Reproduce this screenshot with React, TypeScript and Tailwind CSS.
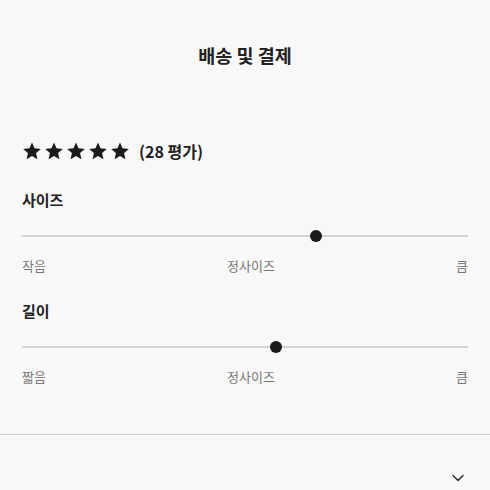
import { ChevronDown } from "lucide-react";

const font = { fontFamily: '"Noto Sans CJK KR", "Noto Sans", sans-serif' };

function Star() {
  return (
    <svg viewBox="0 0 24 24" className="h-[20px] w-[20px] fill-[#1c1c1c]">
      <path d="M12 1.8l3.05 6.95 7.55.7-5.72 5.02 1.7 7.43L12 17.98l-6.58 3.92 1.7-7.43L1.4 9.45l7.55-.7z" />
    </svg>
  );
}

function FitSlider({
  label,
  value,
  low,
}: {
  label: string;
  value: number;
  low: string;
}) {
  return (
    <div className="flex flex-col">
      <div className="text-[15px] font-bold leading-[20px] text-[#222]">{label}</div>
      <div className="relative mt-[25px] h-[2px] w-full bg-[#d2d2d2]">
        <div
          className="absolute top-1/2 h-[12px] w-[12px] -translate-x-1/2 -translate-y-1/2 rounded-full bg-[#1a1a1a]"
          style={{ left: `${value}%` }}
        />
      </div>
      <div className="mt-[20px] flex justify-between text-[13px] leading-[18px] text-[#777]">
        <span>{low}</span>
        <span>정사이즈</span>
        <span>큼</span>
      </div>
    </div>
  );
}

export default function App() {
  return (
    <main className="min-h-[490px] w-full bg-[#f8f8f8]" style={font}>
      <div className="px-[22px] pt-[43px]">
        <h2 className="text-center text-[18.5px] font-bold leading-[24px] text-[#222]">
          배송 및 결제
        </h2>

        {/* Rating */}
        <div className="mt-[72px] flex items-center">
          <div className="flex gap-[2px]">
            <Star />
            <Star />
            <Star />
            <Star />
            <Star />
          </div>
          <span className="ml-[9px] text-[16px] font-semibold text-[#222]">(28 평가)</span>
        </div>

        <div className="mt-[27px]">
          <FitSlider label="사이즈" value={66} low="작음" />
        </div>
        <div className="mt-[26px]">
          <FitSlider label="길이" value={57} low="짧음" />
        </div>
      </div>

      <div className="mt-[48px] h-px w-full bg-[#cccccc]" />

      <div className="flex justify-end px-[22px] pt-[33px]">
        <ChevronDown className="h-[20px] w-[20px] text-[#222]" strokeWidth={1.6} />
      </div>
    </main>
  );
}
